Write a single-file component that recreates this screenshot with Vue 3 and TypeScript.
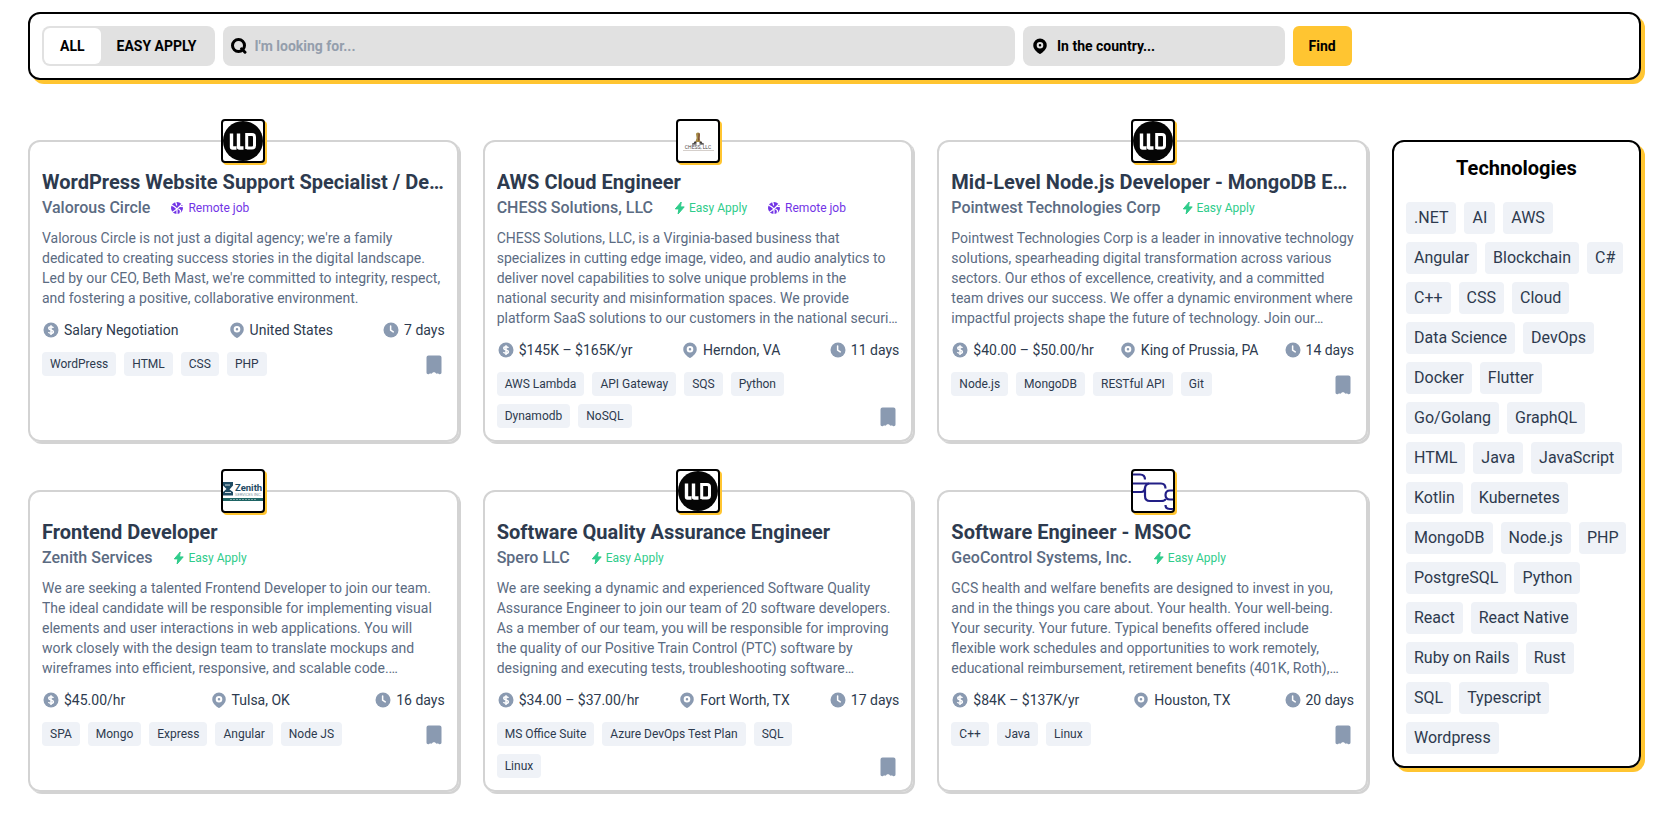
<script setup lang="ts">
import { ref } from 'vue'

type Logo = 'wd' | 'chess' | 'zenith' | 'gcs'

interface Job {
  id: number
  logo: Logo
  title: string
  company: string
  easy: boolean
  remote: boolean
  text: string
  salary: string
  place: string
  age: string
  tags: string[]
}

const mode = ref<'all' | 'easy'>('all')
const query = ref('')
const country = ref('')

const jobs: Job[] = [
  {
    id: 1, logo: 'wd', title: 'WordPress Website Support Specialist / Developer', company: 'Valorous Circle',
    easy: false, remote: true,
    text: "Valorous Circle is not just a digital agency; we're a family dedicated to creating success stories in the digital landscape. Led by our CEO, Beth Mast, we're committed to integrity, respect, and fostering a positive, collaborative environment.",
    salary: 'Salary Negotiation', place: 'United States', age: '7 days',
    tags: ['WordPress', 'HTML', 'CSS', 'PHP'],
  },
  {
    id: 2, logo: 'chess', title: 'AWS Cloud Engineer', company: 'CHESS Solutions, LLC',
    easy: true, remote: true,
    text: 'CHESS Solutions, LLC, is a Virginia-based business that specializes in cutting edge image, video, and audio analytics to deliver novel capabilities to solve unique problems in the national security and misinformation spaces. We provide platform SaaS solutions to our customers in the national securi…',
    salary: '$145K – $165K/yr', place: 'Herndon, VA', age: '11 days',
    tags: ['AWS Lambda', 'API Gateway', 'SQS', 'Python', 'Dynamodb', 'NoSQL'],
  },
  {
    id: 3, logo: 'wd', title: 'Mid-Level Node.js Developer - MongoDB Expert', company: 'Pointwest Technologies Corp',
    easy: true, remote: false,
    text: 'Pointwest Technologies Corp is a leader in innovative technology solutions, spearheading digital transformation across various sectors. Our ethos of excellence, creativity, and a committed team drives our success. We offer a dynamic environment where impactful projects shape the future of technology. Join our…',
    salary: '$40.00 – $50.00/hr', place: 'King of Prussia, PA', age: '14 days',
    tags: ['Node.js', 'MongoDB', 'RESTful API', 'Git'],
  },
  {
    id: 4, logo: 'zenith', title: 'Frontend Developer', company: 'Zenith Services',
    easy: true, remote: false,
    text: 'We are seeking a talented Frontend Developer to join our team. The ideal candidate will be responsible for implementing visual elements and user interactions in web applications. You will work closely with the design team to translate mockups and wireframes into efficient, responsive, and scalable code.…',
    salary: '$45.00/hr', place: 'Tulsa, OK', age: '16 days',
    tags: ['SPA', 'Mongo', 'Express', 'Angular', 'Node JS'],
  },
  {
    id: 5, logo: 'wd', title: 'Software Quality Assurance Engineer', company: 'Spero LLC',
    easy: true, remote: false,
    text: 'We are seeking a dynamic and experienced Software Quality Assurance Engineer to join our team of 20 software developers. As a member of our team, you will be responsible for improving the quality of our Positive Train Control (PTC) software by designing and executing tests, troubleshooting software…',
    salary: '$34.00 – $37.00/hr', place: 'Fort Worth, TX', age: '17 days',
    tags: ['MS Office Suite', 'Azure DevOps Test Plan', 'SQL', 'Linux'],
  },
  {
    id: 6, logo: 'gcs', title: 'Software Engineer - MSOC', company: 'GeoControl Systems, Inc.',
    easy: true, remote: false,
    text: 'GCS health and welfare benefits are designed to invest in you, and in the things you care about. Your health. Your well-being. Your security. Your future. Typical benefits offered include flexible work schedules and opportunities to work remotely, educational reimbursement, retirement benefits (401K, Roth),…',
    salary: '$84K – $137K/yr', place: 'Houston, TX', age: '20 days',
    tags: ['C++', 'Java', 'Linux'],
  },
]

const technologies: string[][] = [
  ['.NET', 'AI', 'AWS'],
  ['Angular', 'Blockchain', 'C#'],
  ['C++', 'CSS', 'Cloud'],
  ['Data Science', 'DevOps'],
  ['Docker', 'Flutter'],
  ['Go/Golang', 'GraphQL'],
  ['HTML', 'Java', 'JavaScript'],
  ['Kotlin', 'Kubernetes'],
  ['MongoDB', 'Node.js', 'PHP'],
  ['PostgreSQL', 'Python'],
  ['React', 'React Native'],
  ['Ruby on Rails', 'Rust'],
  ['SQL', 'Typescript'],
  ['Wordpress'],
]
</script>

<template>
  <div class="page">
    <form class="search-bar" role="search" @submit.prevent>
      <div class="toggle">
        <button type="button" :class="{ active: mode === 'all' }" :aria-pressed="mode === 'all'" @click="mode = 'all'">ALL</button>
        <button type="button" :class="{ active: mode === 'easy' }" :aria-pressed="mode === 'easy'" @click="mode = 'easy'">EASY APPLY</button>
      </div>
      <label class="field">
        <svg class="search-icon" viewBox="0 0 16 16" aria-hidden="true">
          <circle cx="7.5" cy="7.5" r="6" fill="none" stroke="#000" stroke-width="3" />
          <path d="M10.6 10.8 14 14.2" stroke="#000" stroke-width="3" stroke-linecap="round" />
        </svg>
        <input v-model="query" type="text" placeholder="I'm looking for..." aria-label="I'm looking for" />
      </label>
      <label class="field">
        <svg class="pin-icon" viewBox="0 0 24 24" aria-hidden="true">
          <path fill-rule="evenodd" fill="#000" d="M12 2a9 9 0 0 0-9 9c0 5.300 4.600 8.500 7.200 10.800a2.700 2.700 0 0 0 3.600 0C16.400 19.500 21 16.300 21 11a9 9 0 0 0-9-9Zm0 4.600a4.400 4.400 0 1 1 0 8.800 4.400 4.400 0 0 1 0-8.800Zm0 2.700a1.700 1.700 0 1 0 0 3.400 1.700 1.700 0 0 0 0-3.400Z" />
        </svg>
        <select v-model="country" aria-label="Country">
          <option value="">In the country...</option>
        </select>
      </label>
      <button type="submit" class="find">Find</button>
    </form>

    <div class="content">
      <main class="jobs">
        <article v-for="job in jobs" :key="job.id" class="card">
          <div class="logo">
            <svg v-if="job.logo === 'wd'" viewBox="0 0 40 40" role="img" :aria-label="job.company">
              <circle cx="20" cy="20" r="20" fill="#050505" />
              <path d="M8.500 12.500V26q0 1 1 1h4M15.500 12.500V26q0 1 1 1h4" fill="none" stroke="#fff" stroke-width="3.400" />
              <path d="M23.700 28V13.500h5.300q2.500 0 2.500 2.500v8.500q0 2.500-2.500 2.500h-5.300" fill="none" stroke="#fff" stroke-width="3" />
            </svg>
            <svg v-else-if="job.logo === 'chess'" viewBox="0 0 40 40" role="img" :aria-label="job.company">
              <path d="M18 13q0-1.500 2-1.500t2 1.500l-.6 4 1.200 4h-5.200l1.200-4Z" fill="#a58a45" />
              <path d="M20.600 12q1.200 0 1.200 2l-.3 5-1.500 1Z" fill="#7b4b35" />
              <path d="m15 23 2-3 2 2Zm10 0-2-3-2 2Z" fill="#3c3634" />
              <path d="M14 23h4.500M21.500 23H26" stroke="#222" stroke-width="1" />
              <text x="20" y="28" text-anchor="middle" font-family="Roboto, sans-serif" font-size="5" fill="#4b4545">CHESS, LLC</text>
              <path d="M5 29.500h31" stroke="#d5cfcb" stroke-width="1" />
            </svg>
            <svg v-else-if="job.logo === 'zenith'" viewBox="0 0 40 40" role="img" :aria-label="job.company">
              <path d="M0 11h10v3.500L6.500 18.500 10 21v3.500H0V21l3.500-3L0 14.500Z" fill="#1f4b63" />
              <path d="M2 14h5M2 21.500h6" stroke="#cfdde2" stroke-width="1" />
              <text x="12" y="20" font-family="Roboto, sans-serif" font-size="9.500" font-weight="700" fill="#1f4b63">Zenith</text>
              <text x="12" y="25" font-family="Roboto, sans-serif" font-size="4" fill="#7c95a0">SERVICES INC.</text>
              <path d="M0 28.500h40" stroke="#1e6464" stroke-width="3" />
              <path d="M7 28.500h26" stroke="#7fa8a8" stroke-width="1" stroke-dasharray="2 1" />
            </svg>
            <svg v-else viewBox="0 0 40 40" role="img" :aria-label="job.company">
              <g fill="none" stroke="#221f86" stroke-width="2.200">
                <path d="M0 3.500h7q5 0 5 5" />
                <path d="M0 12.500h28q4.500 0 4.500 5" />
                <path d="M0 21h8q4 0 4-4.500" />
                <path d="M16 12.500q-4 1-4 5V25q0 5 5 5h11q4 0 4.500-2" />
                <path d="M40 19.500h-3q-4.500 0-4.500 4.500t4.500 4.500h3M32.500 34q0 4 4.500 4h3" />
              </g>
            </svg>
          </div>

          <h2>{{ job.title }}</h2>
          <div class="company-row">
            <h3>{{ job.company }}</h3>
            <span v-if="job.easy" class="badge easy">
              <svg viewBox="0 0 14 14" aria-hidden="true"><path d="M8.200 1 2.300 7.900h3.600L5.100 13l6.100-7.100H7.500Z" fill="currentColor" stroke="currentColor" stroke-width="1" stroke-linejoin="round" /></svg>
              Easy Apply
            </span>
            <span v-if="job.remote" class="badge remote">
              <svg viewBox="0 0 14 14" aria-hidden="true">
                <circle cx="7" cy="7" r="6" fill="currentColor" />
                <path d="m.5 3.500 4 2.300L7 8l5.500-5.500M7 8v6M7 8 1.500 12M5.500 0l1.200 4.500M8.500 8l2 1.500-.5 4M10 5.500l4 .2" fill="none" stroke="#fff" stroke-width="1.200" />
              </svg>
              Remote job
            </span>
          </div>
          <p class="text">{{ job.text }}</p>

          <div class="facts">
            <span>
              <svg viewBox="0 0 24 24" aria-hidden="true">
                <circle cx="12" cy="12" r="10" fill="currentColor" />
                <path d="M15.200 9.200c-.5-1-1.600-1.600-3.200-1.600-1.800 0-3 .8-3 2.100 0 3 6.200 1.400 6.200 4.500 0 1.400-1.300 2.200-3.200 2.200-1.700 0-2.900-.7-3.400-1.800M12 5.500v13" fill="none" stroke="#fff" stroke-width="2" />
              </svg>
              {{ job.salary }}
            </span>
            <span>
              <svg viewBox="0 0 24 24" aria-hidden="true">
                <path fill-rule="evenodd" fill="currentColor" d="M12 2a9 9 0 0 0-9 9c0 5.300 4.600 8.500 7.200 10.800a2.700 2.700 0 0 0 3.600 0C16.400 19.500 21 16.300 21 11a9 9 0 0 0-9-9Zm0 4.600a4.400 4.400 0 1 1 0 8.800 4.400 4.400 0 0 1 0-8.800Zm0 2.700a1.700 1.700 0 1 0 0 3.400 1.700 1.700 0 0 0 0-3.400Z" />
              </svg>
              {{ job.place }}
            </span>
            <span>
              <svg viewBox="0 0 24 24" aria-hidden="true">
                <circle cx="12" cy="12" r="10" fill="currentColor" />
                <path d="M11.500 6.500V12l3.500 2.500" fill="none" stroke="#fff" stroke-width="2" stroke-linecap="round" />
              </svg>
              {{ job.age }}
            </span>
          </div>

          <div class="card-foot">
            <div class="tags small">
              <a v-for="tag in job.tags" :key="tag" href="#">{{ tag }}</a>
            </div>
            <button type="button" class="save" aria-label="Save job">
              <svg viewBox="0 0 22 24" aria-hidden="true">
                <path d="M5.500 3.500h11a2 2 0 0 1 2 2v15c0 1.500-1.500 2.100-2.600 1.400-.9-.5-1.700-.5-2.600-.1-.9-1.300-1.400-1.600-2.300-1.600s-1.400.3-2.300 1.600c-.9-.4-1.700-.4-2.600.1-1.100.7-2.600.1-2.600-1.400v-15a2 2 0 0 1 2-2Z" fill="currentColor" />
              </svg>
            </button>
          </div>
        </article>
      </main>

      <aside class="technologies">
        <h2>Technologies</h2>
        <div class="tag-rows">
          <div v-for="(row, i) in technologies" :key="i" class="tags">
            <a v-for="tech in row" :key="tech" href="#">{{ tech }}</a>
          </div>
        </div>
      </aside>
    </div>
  </div>
</template>

<style>
body {
  margin: 0;
  background: #fff;
}
</style>

<style scoped>
.page,
.page * {
  box-sizing: border-box;
}

.page {
  padding: 12px 24px 20px 28px;
  font-family: Roboto, "Liberation Sans", sans-serif;
  font-size: 14px;
  line-height: 20px;
  color: #2d3a4e;
}

h2,
h3,
p {
  margin: 0;
}

button,
input,
select {
  margin: 0;
  padding: 0;
  border: 0;
  background: none;
  font: inherit;
  color: inherit;
}

button {
  cursor: pointer;
}

svg {
  display: block;
  flex: none;
}

.search-bar {
  display: grid;
  grid-template-columns: auto 50% 16.5% auto 1fr;
  gap: 8px;
  padding: 12px;
  border: 2px solid #000;
  border-radius: 12px;
  box-shadow: 4px 4px 0 #ffc531;
  font-weight: 700;
  color: #000;
}

.toggle {
  display: flex;
  height: 40px;
  padding: 2px;
  border-radius: 8px;
  background: #e1e1e1;
}

.toggle button {
  padding: 0 16px;
  border-radius: 6px;
}

.toggle .active {
  background: #fff;
}

.field {
  display: flex;
  align-items: center;
  gap: 8px;
  height: 40px;
  padding: 0 8px;
  border-radius: 8px;
  background: #e1e1e1;
  min-width: 0;
}

.field input,
.field select {
  flex: 1;
  min-width: 0;
  height: 40px;
  outline: none;
  appearance: none;
}

.field input::placeholder {
  color: #949eac;
  opacity: 1;
}

.search-icon {
  width: 16px;
  height: 16px;
}

.pin-icon {
  width: 18px;
  height: 18px;
}

.find {
  height: 40px;
  padding: 0 16px;
  border-radius: 6px;
  background: #ffc531;
}

.content {
  display: grid;
  grid-template-columns: minmax(0, 1fr) 249px;
  align-items: start;
  gap: 24px;
  margin-top: 60px;
}

.jobs {
  display: grid;
  grid-template-columns: repeat(3, minmax(0, 1fr));
  gap: 48px 24px;
}

.card {
  position: relative;
  padding: 26px 12px 12px;
  border: 2px solid #d3d3d3;
  border-radius: 12px;
  box-shadow: 2px 2px 0 #d3d3d3;
}

.logo {
  position: absolute;
  top: -23px;
  left: calc(50% - 22px);
  width: 44px;
  height: 44px;
  border: 2px solid #000;
  border-radius: 4px;
  background: #fff;
  box-shadow: 2px 2px 0 #ffc531;
  overflow: hidden;
}

.card h2 {
  overflow: hidden;
  font-size: 20px;
  line-height: 28px;
  font-weight: 700;
  white-space: nowrap;
  text-overflow: ellipsis;
}

.company-row {
  display: flex;
  align-items: center;
  gap: 20px;
  height: 24px;
}

.company-row h3 {
  font-size: 16px;
  line-height: 24px;
  font-weight: 500;
  color: #5b6b82;
}

.badge {
  display: flex;
  align-items: center;
  gap: 4px;
  font-size: 12px;
  line-height: 16px;
}

.badge svg {
  width: 14px;
  height: 14px;
}

.easy {
  gap: 2px;
  color: #2fcc8b;
}

.remote {
  color: #7234e6;
}

.text {
  margin-top: 8px;
  color: #5b6b82;
}

.facts {
  display: flex;
  justify-content: space-between;
  margin-top: 12px;
}

.facts span {
  display: flex;
  align-items: center;
  gap: 4px;
}

.facts svg {
  width: 18px;
  height: 18px;
  color: #8a9ab1;
}

.card-foot {
  display: flex;
  justify-content: space-between;
  align-items: flex-end;
  margin-top: 12px;
}

.card-foot .tags {
  width: 80%;
}

.save {
  width: 22px;
  height: 24px;
  color: #8a9ab1;
}

.tags {
  display: flex;
  flex-wrap: wrap;
  gap: 8px;
}

.tag-rows {
  display: grid;
  gap: 8px;
}

.tags a {
  padding: 4px 8px;
  border-radius: 4px;
  background: #eff2f7;
  font-size: 16px;
  line-height: 24px;
  color: inherit;
  text-decoration: none;
}

.tags.small a {
  font-size: 12px;
  line-height: 16px;
}

.technologies {
  padding: 12px;
  border: 2px solid #000;
  border-radius: 12px;
  box-shadow: 4px 4px 0 #ffc531;
}

.technologies h2 {
  margin-bottom: 20px;
  font-size: 20px;
  line-height: 28px;
  font-weight: 700;
  text-align: center;
  color: #000;
}
</style>
